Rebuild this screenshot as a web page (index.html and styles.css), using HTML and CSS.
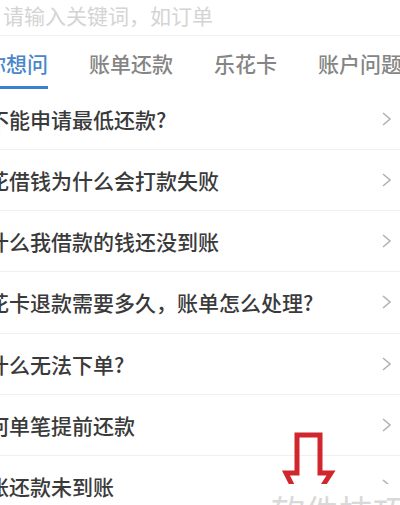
FILE: index.html
```html
<!DOCTYPE html>
<html lang="zh-CN">
<head>
  <meta charset="UTF-8" />
  <meta name="viewport" content="width=device-width, initial-scale=1.0"/>
  <title>帮助中心</title>
  <link rel="stylesheet" href="styles.css">
</head>
<body>
  <div class="search">请输入关键词，如订单</div>

  <ul class="tabs">
    <li class="active">你想问</li>
    <li>账单还款</li>
    <li>乐花卡</li>
    <li>账户问题</li>
  </ul>

  <ul class="list">
    <li><span class="q">不能申请最低还款?</span><svg class="more" width="9" height="14" viewBox="0 0 9 14"><polyline points="1,1 8,7 1,13"/></svg></li>
    <li><span class="q">花借钱为什么会打款失败</span><svg class="more" width="9" height="14" viewBox="0 0 9 14"><polyline points="1,1 8,7 1,13"/></svg></li>
    <li><span class="q">什么我借款的钱还没到账</span><svg class="more" width="9" height="14" viewBox="0 0 9 14"><polyline points="1,1 8,7 1,13"/></svg></li>
    <li><span class="q">花卡退款需要多久，账单怎么处理?</span><svg class="more" width="9" height="14" viewBox="0 0 9 14"><polyline points="1,1 8,7 1,13"/></svg></li>
    <li><span class="q">什么无法下单?</span><svg class="more" width="9" height="14" viewBox="0 0 9 14"><polyline points="1,1 8,7 1,13"/></svg></li>
    <li><span class="q">何单笔提前还款</span><svg class="more" width="9" height="14" viewBox="0 0 9 14"><polyline points="1,1 8,7 1,13"/></svg></li>
    <li><span class="q">账还款未到账</span><svg class="more" width="9" height="14" viewBox="0 0 9 14"><polyline points="1,1 8,7 1,13"/></svg></li>
  </ul>

  <!-- red annotation arrow -->
  <svg class="mark" width="60" height="70" viewBox="278 428 60 70">
    <path d="M293,487 L286,473 L297,473 L297,435 L320,435 L320,473 L331,473 L322,487"/>
  </svg>

  <div class="watermark">软件技巧</div>
</body>
</html>
```

FILE: styles.css
```css
body {
  margin: 0;
  width: 400px;
  height: 505px;
  overflow: hidden;
  position: relative;
  background: #fff;
  font-family: "Noto Sans CJK SC", "Noto Sans", sans-serif;
}
ul {
  list-style: none; margin: 0; padding: 0;
}

.search {
  height: 35px;
  line-height: 30px;
  padding-left: 3px;
  font-size: 21px;
  color: #d4d4d4;
  border-bottom: 1px solid #f0f0f0;
  white-space: nowrap;
}

.tabs {
  display: flex;
  gap: 41px;
  height: 53px;
  white-space: nowrap;
}
.tabs li {
  padding-top: 13px;
  padding-bottom: 9px;
  line-height: 28px;
  font-size: 21px;
  font-weight: 500;
  color: #858585;
  border-bottom: 3px solid transparent;
}
.tabs li.active {
  margin-left: -15px;
  color: #4a86c9;
  border-bottom-color: #3d7fcf;
}

.list {
  height: 416px;
  overflow: hidden;
}
.list li {
  display: flex;
  align-items: center;
  justify-content: space-between;
  height: 60.2px;
  padding-right: 9px;
  border-bottom: 1px solid #f0f0f0;
}
.list li:first-child {
  height: 60px;
}
.q {
  margin-left: -12px;
  font-size: 21px;
  font-weight: 500;
  color: #3a3a3a;
  white-space: nowrap;
}
.more polyline {
  fill: none;
  stroke: #b3b3b3;
  stroke-width: 1.6;
}

.mark {
  position: absolute;
  left: 278px;
  top: 428px;
}
.mark path {
  fill: none;
  stroke: #d2262e;
  stroke-width: 5;
}

.watermark {
  position: absolute;
  left: 262px;
  top: 484px;
  right: 0;
  bottom: 0;
  padding: 10px 0 0 9px;
  background: #fff;
  font-size: 34px;
  line-height: 1;
  color: #d9d9d9;
  white-space: nowrap;
}
```
